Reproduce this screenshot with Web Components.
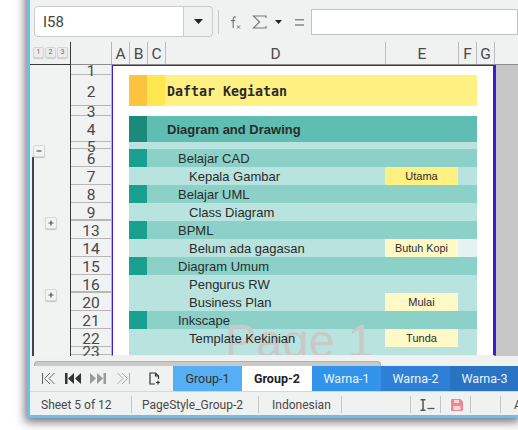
<!DOCTYPE html>
<html lang="en">
<head>
<meta charset="UTF-8">
<title>Daftar Kegiatan</title>
<style>
  html, body { margin: 0; height: 430px; overflow: hidden; background: #fff; }
  body { font-family: Roboto, sans-serif; color: #3c3c3c; }
</style>
</head>
<body>
<calc-window>
  <formula-bar></formula-bar>
  <col-header></col-header>
  <sheet-view></sheet-view>
  <h-scroll></h-scroll>
  <tab-bar>
    <sheet-tab style="--bg:#56aef5;--fg:#333">Group-1</sheet-tab>
    <sheet-tab style="--bg:#fff;--fg:#222;--w:70px;--weight:700">Group-2</sheet-tab>
    <sheet-tab style="--bg:#3194ea;--fg:#e8f3fd">Warna-1</sheet-tab>
    <sheet-tab style="--bg:#2e80d6;--fg:#e8f3fd">Warna-2</sheet-tab>
    <sheet-tab style="--bg:#2a72c2;--fg:#e8f3fd">Warna-3</sheet-tab>
  </tab-bar>
  <status-bar>
    <status-cell style="--w:102px;--pad:11px">Sheet 5 of 12</status-cell>
    <status-cell style="--w:127px;--pad:10px">PageStyle_Group-2</status-cell>
    <status-cell style="--w:83px;--pad:13px">Indonesian</status-cell>
    <status-cell style="--w:69px"></status-cell>
    <status-cell style="--w:30px;--pad:8px">
      <svg width="16" height="12" viewBox="0 0 16 12" fill="none" stroke="#555"><path d="M1.5 .8h5M1.5 11.2h5M4 .8v10.4" stroke-width="1.5"/><path d="M8.5 9.5h7" stroke-width="1.3"/></svg>
    </status-cell>
    <status-cell style="--w:30px;--pad:10px">
      <svg width="12" height="12" viewBox="0 0 12 12"><path d="M1 0h8.5L12 2.5V11a1 1 0 0 1-1 1H1a1 1 0 0 1-1-1V1a1 1 0 0 1 1-1z" fill="#e98a92"/><path d="M3 1h5v3H3zM2.5 7h7v4h-7z" fill="#f7d4d7"/></svg>
    </status-cell>
    <status-cell style="--w:30px"></status-cell>
    <status-cell style="--pad:13px;--w:18px;--line:0">A</status-cell>
  </status-bar>
</calc-window>

<script>
  const rows = [
    { n: '1', h: 10 },
    { n: '2', h: 31, kind: 'title', text: 'Daftar Kegiatan' },
    { n: '3', h: 10 },
    { n: '4', h: 26, kind: 'head', text: 'Diagram and Drawing' },
    { n: '5', h: 7, kind: 'gap' },
    { n: '6', h: 18, kind: 'group', text: 'Belajar CAD' },
    { n: '7', h: 18, kind: 'item', text: 'Kepala Gambar', tag: 'Utama', tagBg: '#fff082' },
    { n: '8', h: 18, kind: 'group', text: 'Belajar UML' },
    { n: '9', h: 18, kind: 'item', text: 'Class Diagram', thick: true },
    { n: '13', h: 18, kind: 'group', text: 'BPML' },
    { n: '14', h: 18, kind: 'item', text: 'Belum ada gagasan', tag: 'Butuh Kopi', tagBg: '#fff9c8', tail: '#e4f3f1', small: true },
    { n: '15', h: 18, kind: 'group', text: 'Diagram Umum' },
    { n: '16', h: 18, kind: 'item', text: 'Pengurus RW', thick: true },
    { n: '20', h: 18, kind: 'item', text: 'Business Plan', tag: 'Mulai', tagBg: '#fff9c8' },
    { n: '21', h: 18, kind: 'group', text: 'Inkscape' },
    { n: '22', h: 18, kind: 'item', text: 'Template Kekinian', tag: 'Tunda', tagBg: '#fff9c8' },
    { n: '23', h: 8, kind: 'gap' }
  ]

  customElements.define('calc-window', class extends HTMLElement {
    connectedCallback() {
      this.attachShadow({ mode: 'open' })
      // sube 20px para que la sombra no se apague arriba
      this.shadowRoot.innerHTML = `<style>
        :host { display: flex; flex-direction: column; box-sizing: border-box; width: 491px; height: 438px;
          margin: -20px 0 0 27px; padding-top: 20px; border-left: 3px solid #64c0f8; border-bottom: 3px solid #64c0f8;
          background: #f0f1f1; box-shadow: 0 2px 9px 2px rgba(0,0,0,.55); }
      </style><slot></slot>`
    }
  })

  customElements.define('formula-bar', class extends HTMLElement {
    connectedCallback() {
      this.attachShadow({ mode: 'open' })
      this.shadowRoot.innerHTML = `<style>
        :host { display: flex; align-items: center; height: 42px; padding: 2px 0 0 4px; box-sizing: border-box; flex: none; overflow: hidden; }
        .name { display: flex; width: 179px; height: 31px; box-sizing: border-box; border: 1px solid #cbcbcb; border-radius: 4px; background: #f0f1f1; flex: none; margin-top: -1px; }
        .name b { flex: 1; background: #fff; font: 400 15px/31px Roboto, sans-serif; color: #444; padding-left: 8px; height: 29px; border-right: 1px solid #cbcbcb; border-radius: 4px 0 0 4px; }
        .name i { width: 28px; display: flex; align-items: center; justify-content: center; }
        .sep { width: 1px; height: 24px; background: #c9c9c9; margin-left: 5px; margin-right: 11px; flex: none; }
        svg { flex: none; }
        input { flex: 1; min-width: 0; height: 26px; box-sizing: border-box; border: 1px solid #c2c2c2; background: #fff; margin: 0 0 0 7px; padding: 0; }
      </style>
      <div class="name"><b>I58</b><i><svg width="9" height="5" viewBox="0 0 9 5"><path d="M0 0h9L4.5 5z" fill="#222"/></svg></i></div>
      <div class="sep"></div>
      <svg width="11" height="13" viewBox="0 0 11 13" fill="none" stroke="#777"><path d="M6 1.2C4 .4 3.3 1.4 3.2 3v9M.8 4.6h4.4" stroke-width="1.2"/><path d="M7 9.5l3 3M10 9.5l-3 3" stroke-width="1"/></svg>
      <svg width="15" height="14" viewBox="0 0 15 14" fill="none" stroke="#777" style="margin-left:11px"><path d="M14 3V1H1.5l6 6-6 6H14v-2" stroke-width="1.2"/></svg>
      <svg width="7" height="4" viewBox="0 0 7 4" style="margin-left:8px"><path d="M0 0h7L3.500 4z" fill="#222"/></svg>
      <svg width="9" height="7" viewBox="0 0 9 7" style="margin-left:13px"><path d="M0 .8h9M0 6h9" stroke="#888" stroke-width="1.5"/></svg>
      <input>`
    }
  })

  const colWidths = [['A', 18], ['B', 18], ['C', 18], ['D', 220], ['E', 73], ['F', 18], ['G', 18]]

  customElements.define('col-header', class extends HTMLElement {
    connectedCallback() {
      this.attachShadow({ mode: 'open' })
      const cols = colWidths.map(([c, w]) => `<div class="c" style="width:${w}px">${c}</div>`).join('')
      this.shadowRoot.innerHTML = `<style>
        :host { display: flex; height: 23px; flex: none; box-sizing: border-box; border-bottom: 1px solid #8d8d8d; font: 15.5px Roboto, sans-serif; color: #4a4a4a; }
        .corner { width: 41px; box-sizing: border-box; border-right: 1px solid #3a3a3a; border-bottom: 1px solid #3a3a3a; margin-bottom: -1px; display: flex; gap: 1px; padding: 5px 0 0 3px; }
        .corner span { width: 11px; height: 11px; box-sizing: border-box; border: 1px solid #d5d5d5; border-radius: 2px; font: 7px/9px Roboto, sans-serif; text-align: center; color: #666; background: #ececec; box-shadow: 0 1px 1px #ccc; }
        .head { width: 41px; box-sizing: border-box; border-right: 1px solid #b5b5b5; }
        .c { box-sizing: border-box; border-right: 1px solid #bdbdbd; text-align: center; line-height: 25px; height: 22px; }
      </style>
      <div class="corner"><span>1</span><span>2</span><span>3</span></div><div class="head"></div>${cols}`
    }
  })

  customElements.define('outline-btn', class extends HTMLElement {
    connectedCallback() {
      this.attachShadow({ mode: 'open' })
      const plus = this.getAttribute('kind') == 'plus'
      this.shadowRoot.innerHTML = `<style>
        :host { position: absolute; width: 12px; height: 12px; box-sizing: border-box; border: 1px solid #d8d8d8; border-radius: 2px; background: #f3f3f3; box-shadow: 0 1px 1px #c4c4c4; display: flex; align-items: center; justify-content: center; }
      </style><svg width="6" height="6" viewBox="0 0 6 6"><path d="${plus ? 'M.5 3h5M3 .5v5' : 'M.5 3h5'}" stroke="#555" stroke-width="1.2"/></svg>`
    }
  })

  customElements.define('sheet-view', class extends HTMLElement {
    connectedCallback() {
      this.attachShadow({ mode: 'open' })
      const nums = rows.map(r => `<div class="n${r.thick ? ' thick' : ''}" style="height:${r.h}px"><span>${r.n}</span></div>`).join('')
      const cells = rows.map(r => this.rowHtml(r)).join('')
      this.shadowRoot.innerHTML = `<style>
        :host { display: flex; flex: none; height: 291px; overflow: hidden; background: #c6c6c6; }
        .outline { width: 41px; position: relative; box-sizing: border-box; border-right: 1px solid #3a3a3a; flex: none; background: #f1f2f2; }
        .bar { position: absolute; left: 2px; top: 92px; bottom: 0; width: 2px; background: #3f4247; }
        .nums { width: 41px; flex: none; background: #f1f2f2; font: 15.5px/1 Roboto, sans-serif; color: #484848; box-sizing: border-box; border-right: 1px solid #b5b5b5; overflow: hidden; }
        .n { box-sizing: border-box; border-bottom: 1px solid #b7b7b7; display: flex; align-items: center; justify-content: center; }
        .n.thick { border-bottom-width: 2px; }
        .n span { padding-top: 5px; }
        .page { position: relative; z-index: 0; width: 384px; height: 291px; box-sizing: border-box; flex: none; overflow: hidden; background: #fff; box-shadow: inset 0 1px #3a1fd8; border-left: 1px solid #3a1fd8; border-right: 3px solid #3a1fd8; border-bottom: 1px solid #eee; }
        .r { display: grid; grid-template-columns: 16px 18px 18px 220px 73px 19px 1fr; font: 13px "Liberation Sans", sans-serif; color: #2b2b2b; }
        .r > div { display: flex; align-items: center; min-width: 0; white-space: nowrap; }
        .r span { position: relative; z-index: 2; }
        .tag { justify-content: center; font-size: 11px; }
        .tag.small { font-size: 10.8px; }
        .title { font: 700 13.3px "DejaVu Sans Mono", monospace; padding-top: 2px; box-sizing: border-box; }
        .head { font-weight: 700; }
        .wm { position: absolute; z-index: 1; left: 112px; top: 249px; font: 47px/54px "Liberation Sans", sans-serif; color: #c9c9c9; white-space: nowrap; }
      </style>
      <div class="outline"><div class="bar"></div>
        <outline-btn kind="minus" style="left:3px;top:80px"></outline-btn>
        <outline-btn kind="plus" style="left:15px;top:152px"></outline-btn>
        <outline-btn kind="plus" style="left:15px;top:224px"></outline-btn>
      </div>
      <div class="nums">${nums}</div>
      <div class="page">${cells}<div class="wm">Page 1</div></div>`
    }
    rowHtml(r) {
      const fills = {
        title: ['#fec33f', '#ffe84f', '#fff082'],
        head: ['#1b8a7a', '#5fbdb2', '#5fbdb2'],
        group: ['#1aa08f', '#8cd1c8', '#8cd1c8'],
        item: ['#b9e3de', '#b9e3de', '#b9e3de'],
        gap: ['#b9e3de', '#b9e3de', '#b9e3de']
      }[r.kind]
      if (!fills) return `<div class="r" style="height:${r.h}px"></div>`
      const indent = { title: 2, head: 2, group: 13, item: 24 }[r.kind] || 0
      const cls = r.kind == 'title' ? 'title' : r.kind == 'head' ? 'head' : ''
      const tail = r.tail || fills[2]
      return `<div class="r" style="height:${r.h}px">
        <div></div>
        <div style="background:${fills[0]}"></div>
        <div style="background:${fills[1]}"></div>
        <div class="${cls}" style="background:${fills[2]};padding-left:${indent}px">${r.text ? `<span>${r.text}</span>` : ''}</div>
        <div class="tag${r.small ? ' small' : ''}" style="background:${r.tagBg || fills[2]}">${r.tag ? `<span>${r.tag}</span>` : ''}</div>
        <div style="background:${tail}"></div>
      </div>`
    }
  })

  customElements.define('h-scroll', class extends HTMLElement {
    connectedCallback() {
      this.attachShadow({ mode: 'open' })
      this.shadowRoot.innerHTML = `<style>
        :host { display: block; flex: none; height: 10px; padding: 5px 0 0 4px; box-sizing: border-box; }
        div { width: 347px; height: 5px; box-sizing: border-box; background: #c9c9c9; border: 1px solid #b0b0b0; border-bottom: 0; border-radius: 4px 4px 0 0; }
      </style><div></div>`
    }
  })

  customElements.define('tab-bar', class extends HTMLElement {
    connectedCallback() {
      this.attachShadow({ mode: 'open' })
      this.shadowRoot.innerHTML = `<style>
        :host { display: flex; flex: none; height: 25px; border-bottom: 1px solid #d6d6d6; }
        nav { width: 143px; flex: none; display: flex; align-items: center; padding-left: 12px; box-sizing: border-box; }
        nav svg { flex: none; }
      </style>
      <nav>
        <svg width="13" height="13" viewBox="0 0 13 13" fill="none" stroke="#666"><path d="M.5 1v11" stroke-width="1.1"/><path d="M8 1L2.500 6.500 8 12M12.500 1L7 6.500l5.500 5.500" stroke-width="1"/></svg>
        <svg width="16" height="13" viewBox="0 0 16 13" style="margin-left:10px"><path d="M0 1h2.500v11H0zM9 1v11L3 6.500zM16 1v11L10 6.500z" fill="#333"/></svg>
        <svg width="16" height="13" viewBox="0 0 16 13" style="margin-left:9px"><path d="M13.500 1H16v11h-2.500zM7 1v11l6-5.500zM0 1v11l6-5.500z" fill="#999"/></svg>
        <svg width="13" height="13" viewBox="0 0 13 13" fill="none" stroke="#aaa" style="margin-left:11px"><path d="M12.500 1v11" stroke-width="1.100"/><path d="M5 1l5.500 5.500L5 12M.5 1L6 6.500.5 12" stroke-width="1"/></svg>
        <svg width="11" height="13" viewBox="0 0 11 13" fill="none" stroke="#333" stroke-width="1.2" style="margin-left:19px"><path d="M6 12H1V1h5.500L9.500 4v3"/><path d="M6.500 1v3h3M7 10.500h4M9 8.500v4"/></svg>
      </nav>
      <slot></slot>`
    }
  })

  customElements.define('sheet-tab', class extends HTMLElement {
    connectedCallback() {
      this.attachShadow({ mode: 'open' })
      this.shadowRoot.innerHTML = `<style>
        :host { display: flex; align-items: center; justify-content: center; flex: none; width: var(--w, 69px); background: var(--bg); color: var(--fg); font: var(--weight, 400) 12.500px Roboto, sans-serif; }
      </style><slot></slot>`
    }
  })

  customElements.define('status-bar', class extends HTMLElement {
    connectedCallback() {
      this.attachShadow({ mode: 'open' })
      this.shadowRoot.innerHTML = `<style>
        :host { display: flex; flex: none; align-items: center; height: 24px; padding-top: 1px; box-sizing: border-box; overflow: hidden; }
      </style><slot></slot>`
    }
  })

  customElements.define('status-cell', class extends HTMLElement {
    connectedCallback() {
      this.attachShadow({ mode: 'open' })
      this.shadowRoot.innerHTML = `<style>
        :host { display: flex; align-items: center; flex: none; box-sizing: border-box; height: 17px; width: var(--w); padding-left: var(--pad, 0); border-right: var(--line, 1px) solid #c4c4c4; font: 12px Roboto, sans-serif; color: #484848; white-space: nowrap; }
      </style><slot></slot>`
    }
  })
</script>
</body>
</html>
